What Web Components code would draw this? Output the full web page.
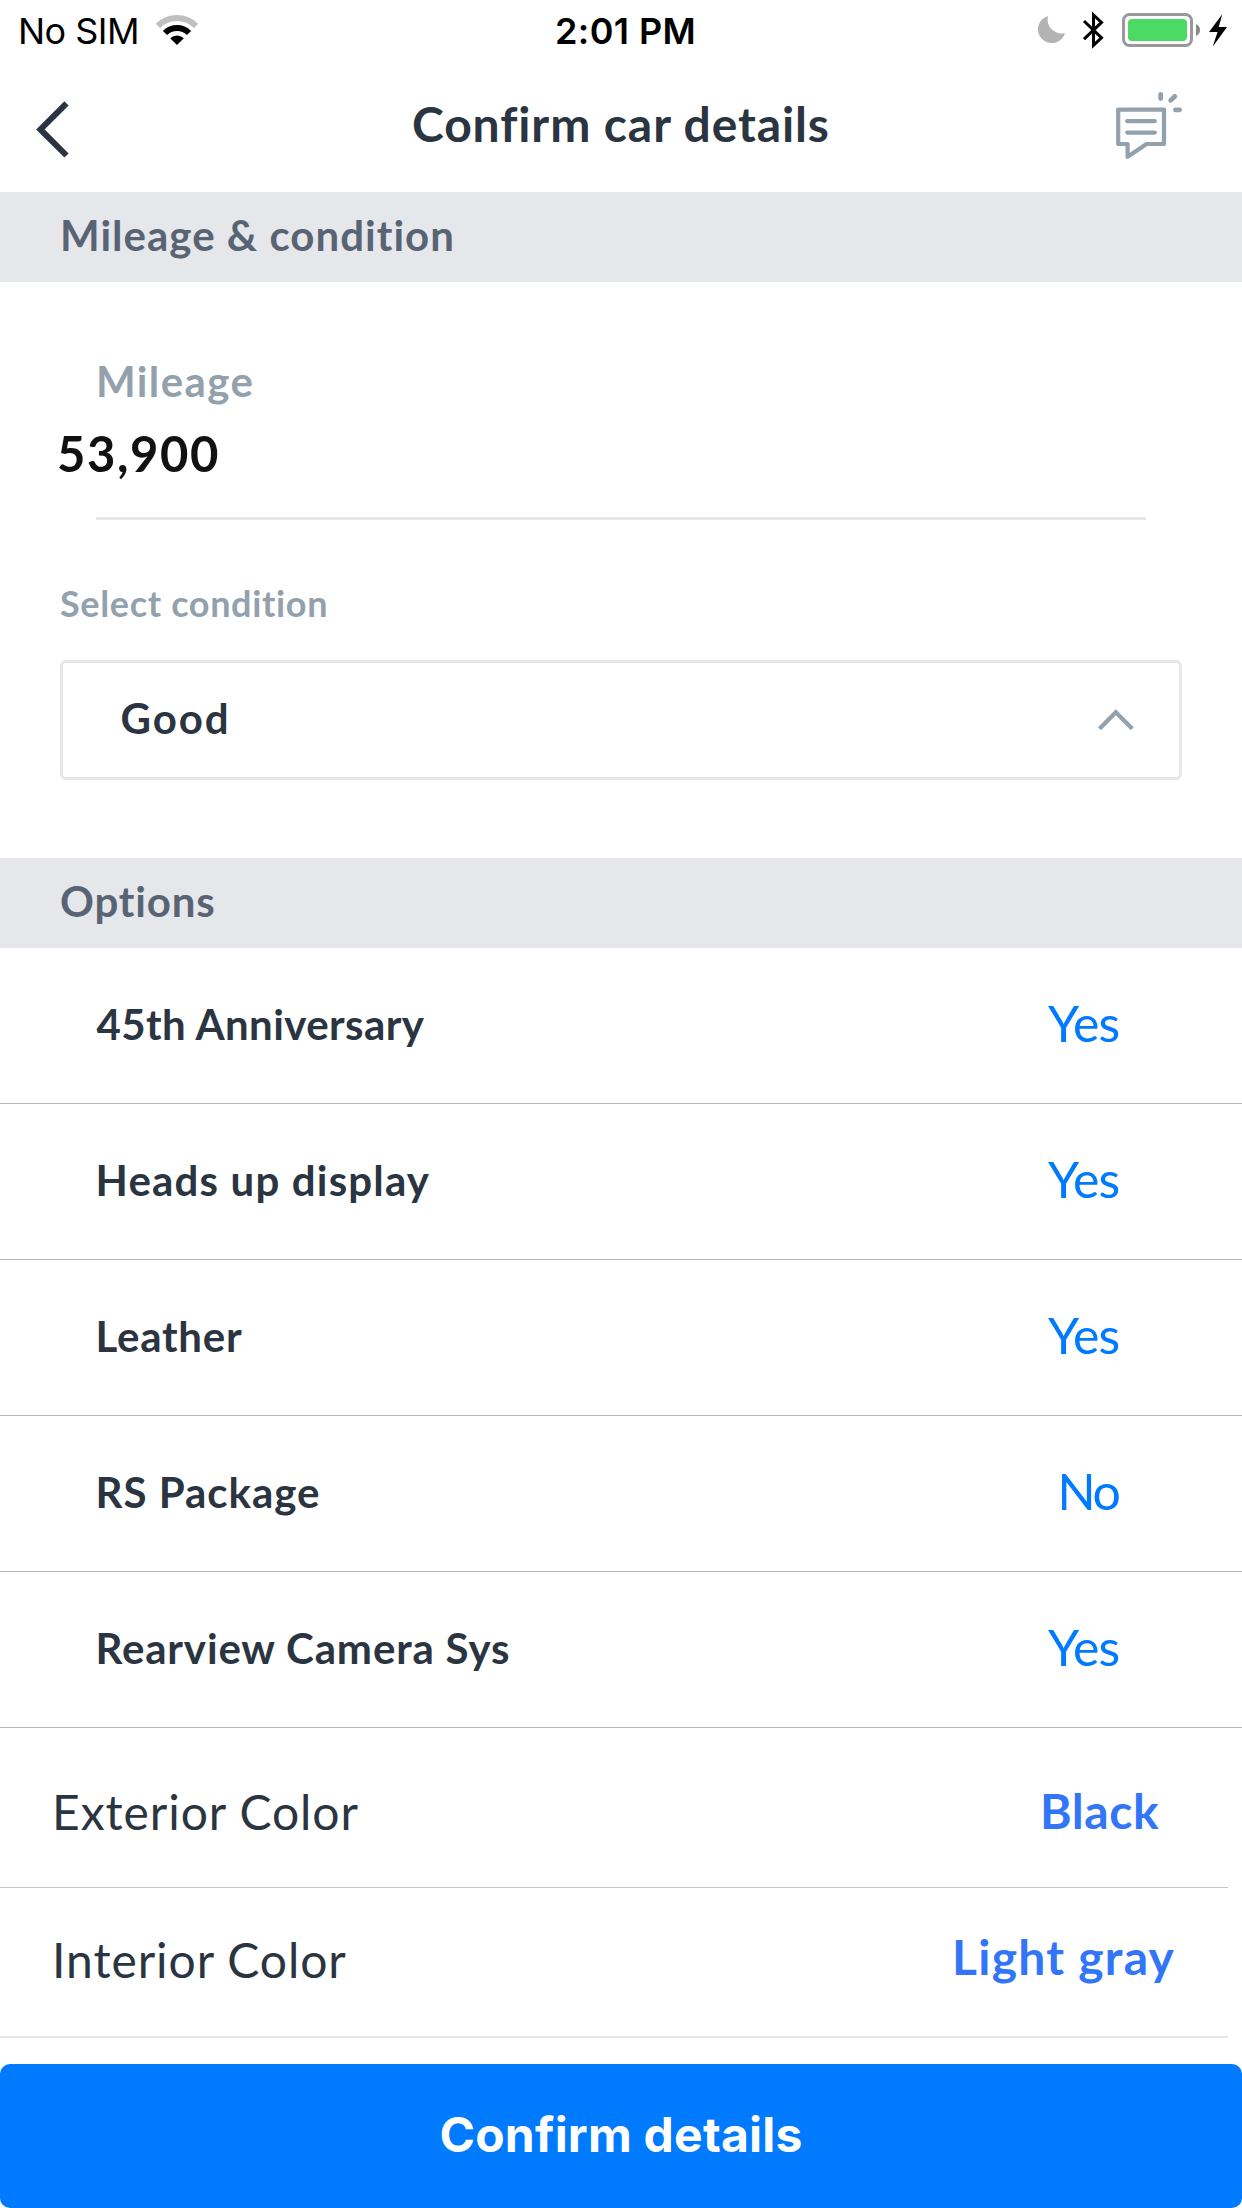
<!DOCTYPE html>
<html lang="en">
<head>
<meta charset="utf-8">
<title>Confirm car details</title>
<style>
  html, body { margin: 0; background: #fff; }
  body { width: 1242px; height: 2208px; overflow: hidden; }
</style>
</head>
<body>
<car-details-page></car-details-page>

<script>
const define = (name, html) => customElements.define(name, class extends HTMLElement {
  constructor() {
    super();
    const t = document.createElement('template');
    t.innerHTML = html;
    this.attachShadow({ mode: 'open' }).append(t.content.cloneNode(true));
  }
});

/* One line of text; size variants share the same type family. */
define('ui-text', `
<style>
  :host { display: block; white-space: nowrap; box-sizing: border-box; flex: none;
    font: 700 42px/50px Lato, "Open Sans", sans-serif; color: #2b3541; letter-spacing: var(--ls, 1px); }
  :host([size="sm"]) { font-size: 36px; line-height: 44px; }
  :host([size="lg"]) { font-size: 48px; line-height: 57px; }
  :host([size="input"]) { font-size: 49px; line-height: 58px; color: #111; }
  :host([size="value"]) { font-size: 50px; line-height: 60px; font-weight: 400; }
  :host([size="status"]) { font: 400 36px/44px Inter, sans-serif; color: #000; }
  :host([size="button"]) { font: 700 48px/59px Inter, sans-serif; color: #fff; }
  :host([weight="400"]) { font-weight: 400; }
  :host([weight="600"]) { font-weight: 600; }
  :host([tone="muted"]) { color: #93a1ad; }
  :host([tone="section"]) { color: #586474; }
  :host([tone="link"]) { color: #007aff; }
  :host([tone="accent"]) { color: #3276f7; }
</style><slot></slot>`);

define('status-bar', `
<style>
  :host { display: flex; height: 60px; box-sizing: border-box; padding: 0 14px 0 18px; }
  .left { display: flex; width: 537px; }
  .left ui-text, .time { margin-top: 9px; }
  .left ui-text { width: 137px; }
  .right { display: flex; margin-left: auto; }
  svg { display: block; flex: none; }
  .bt { margin-left: 16px; } .bat { margin-left: 17px; } .bolt { margin-left: 7px; }
</style>
<div class="left">
  <ui-text size="status" style="--ls:-.52px">No SIM</ui-text>
  <svg width="44" height="50" viewBox="155 0 44 50" fill="none" stroke-width="6">
    <path stroke="#bfbfbf" d="M157.9 25.9A27 27 0 0 1 196.1 25.9"/>
    <path stroke="#000" d="M165 33A17 17 0 0 1 189 33"/>
    <path fill="#000" d="M177 45L170.2 38.3A9.6 9.6 0 0 1 183.8 38.3Z"/>
  </svg>
</div>
<ui-text class="time" size="status" weight="600" style="--ls:.4px">2:01 PM</ui-text>
<div class="right">
  <svg width="28" height="50" viewBox="1038 0 28 50"><path fill="#b3b3b3" d="M1048 16A13.8 13.8 0 1 0 1065 33A14 14 0 0 1 1048 16Z"/></svg>
  <svg class="bt" width="22" height="50" viewBox="1082 0 22 50" fill="none" stroke="#000" stroke-width="3"><path d="M1084 21L1101.5 37.8L1093.5 45.2V15L1101.5 22.4L1084 39.2"/></svg>
  <svg class="bat" width="80" height="50" viewBox="1121 0 80 50">
    <rect x="1123.5" y="14.5" width="68" height="31" rx="6" fill="none" stroke="#999" stroke-width="3"/>
    <rect x="1128" y="19" width="59" height="22" rx="4" fill="#4cd964"/>
    <path fill="#888" d="M1196 24Q1200 26 1200 30T1196 36Z"/>
  </svg>
  <svg class="bolt" width="20" height="50" viewBox="1208 0 20 50"><path d="M1222.3 14.3L1209 32H1217.5L1212.7 46.7L1227 27H1218.7Z"/></svg>
</div>`);

define('nav-bar', `
<style>
  :host { display: flex; height: 132px; }
  svg { display: block; flex: none; }
  .back { margin-left: 34px; }
  .title { margin: 35px 0 0 342px; }
  .chat { margin-left: auto; margin-right: 58px; }
</style>
<svg class="back" width="36" height="132" viewBox="34 60 36 132" fill="none" stroke="#2b3541" stroke-width="6"><path d="M66.5 103.3L40.4 129.4L66.5 155.5"/></svg>
<ui-text class="title" size="lg" style="--ls:.9px"><slot></slot></ui-text>
<svg class="chat" width="70" height="132" viewBox="1114 60 70 132" fill="none" stroke="#93a1ad" stroke-width="4.2" stroke-linecap="round" stroke-linejoin="round">
  <path d="M1118.2 109.6H1164V144H1146.5L1127.6 156.8V144H1118.2Z"/>
  <path d="M1127.2 121.2H1154.8M1127.2 132.6H1154.8"/>
  <path stroke-width="4.8" d="M1160.7 94.3V98.5M1170.7 100.3L1174.8 96.4M1175.4 109.8H1179.6"/>
</svg>`);

define('section-header', `
<style>
  :host { display: block; height: 90px; box-sizing: border-box; padding: 18px 0 0 60px; background: #e6e7eb; }
</style>
<ui-text tone="section"><slot></slot></ui-text>`);

define('mileage-field', `
<style>
  :host { display: flex; flex-direction: column; padding-top: 74px; }
  .label { margin-left: 96px; --ls: 1.4px; }
  .value { margin: 18px 0 35px 57px; --ls: 1.55px; }
  .rule { height: 3px; margin: 0 96px; background: #e6e7eb; }
</style>
<ui-text class="label" tone="muted"><slot name="label"></slot></ui-text>
<ui-text class="value" size="input"><slot></slot></ui-text>
<div class="rule"></div>`);

define('condition-select', `
<style>
  :host { display: block; padding: 61px 60px 78px; }
  .label { margin-left: 0; --ls: .65px; }
  .box { display: flex; margin-top: 35px; height: 120px; box-sizing: border-box;
    border: 3px solid #e6e7eb; border-radius: 6px; padding: 30px 44px 0 57.5px; }
  .value { --ls: 1.9px; }
  svg { display: block; margin: 14px 0 0 auto; }
</style>
<ui-text class="label" size="sm" tone="muted"><slot name="label"></slot></ui-text>
<div class="box">
  <ui-text class="value"><slot></slot></ui-text>
  <svg width="38" height="26" viewBox="1097 707 38 26" fill="none" stroke="#93a1ad" stroke-width="4.2"><path d="M1099.5 728.8L1115.8 712.3L1132.3 728.8"/></svg>
</div>`);

define('option-row', `
<style>
  :host { display: flex; justify-content: space-between; height: 156px; box-sizing: border-box;
    border-bottom: 1px solid #b6b7b9; padding-left: 95.5px; }
  .name { margin-top: 51px; }
  .value { margin-top: 45px; width: var(--vw, 194px); --ls: var(--vls, -.8px); }
</style>
<ui-text class="name"><slot></slot></ui-text>
<ui-text class="value" size="value" tone="link"><slot name="value"></slot></ui-text>`);

define('color-row', `
<style>
  :host { display: flex; justify-content: space-between; box-sizing: border-box; width: 1228px;
    padding-left: 52px; }
  .name { margin-top: var(--nt); --ls: .93px; }
  .value { margin-top: var(--vt); width: var(--vw); --ls: var(--vls); }
</style>
<ui-text class="name" size="lg" weight="400"><slot></slot></ui-text>
<ui-text class="value" size="lg" tone="accent"><slot name="value"></slot></ui-text>`);

define('primary-button', `
<style>
  :host { display: flex; justify-content: center; height: 144px; box-sizing: border-box; padding-top: 41px;
    background: #007aff; border-radius: 10px; }
</style>
<ui-text size="button" style="--ls:.22px"><slot></slot></ui-text>`);

define('car-details-page', `
<style>
  :host { display: flex; flex-direction: column; width: 1242px; height: 2208px; background: #fff; }
  .ext { height: 160px; border-bottom: 1px solid #c4c6c8; --nt: 55px; --vt: 54px; --vw: 188px; --vls: .6px; }
  .int { height: 150px; border-bottom: 2px solid #e4e8eb; --nt: 43px; --vt: 40px; --vw: 276px; --vls: 1.25px; }
  primary-button { margin-top: auto; }
</style>
<status-bar></status-bar>
<nav-bar>Confirm car details</nav-bar>
<section-header style="--ls:1.02px">Mileage &amp; condition</section-header>
<mileage-field><span slot="label">Mileage</span>53,900</mileage-field>
<condition-select><span slot="label">Select condition</span>Good</condition-select>
<section-header style="--ls:.85px">Options</section-header>
<option-row style="padding-left:96.5px;--ls:.42px">45th Anniversary<span slot="value">Yes</span></option-row>
<option-row style="--ls:1.18px">Heads up display<span slot="value">Yes</span></option-row>
<option-row style="--ls:.76px">Leather<span slot="value">Yes</span></option-row>
<option-row style="--ls:.97px;--vw:184.5px;--vls:-2.5px">RS Package<span slot="value">No</span></option-row>
<option-row style="--ls:.84px">Rearview Camera Sys<span slot="value">Yes</span></option-row>
<color-row class="ext">Exterior Color<span slot="value">Black</span></color-row>
<color-row class="int">Interior Color<span slot="value">Light gray</span></color-row>
<primary-button>Confirm details</primary-button>`);
</script>
</body>
</html>
